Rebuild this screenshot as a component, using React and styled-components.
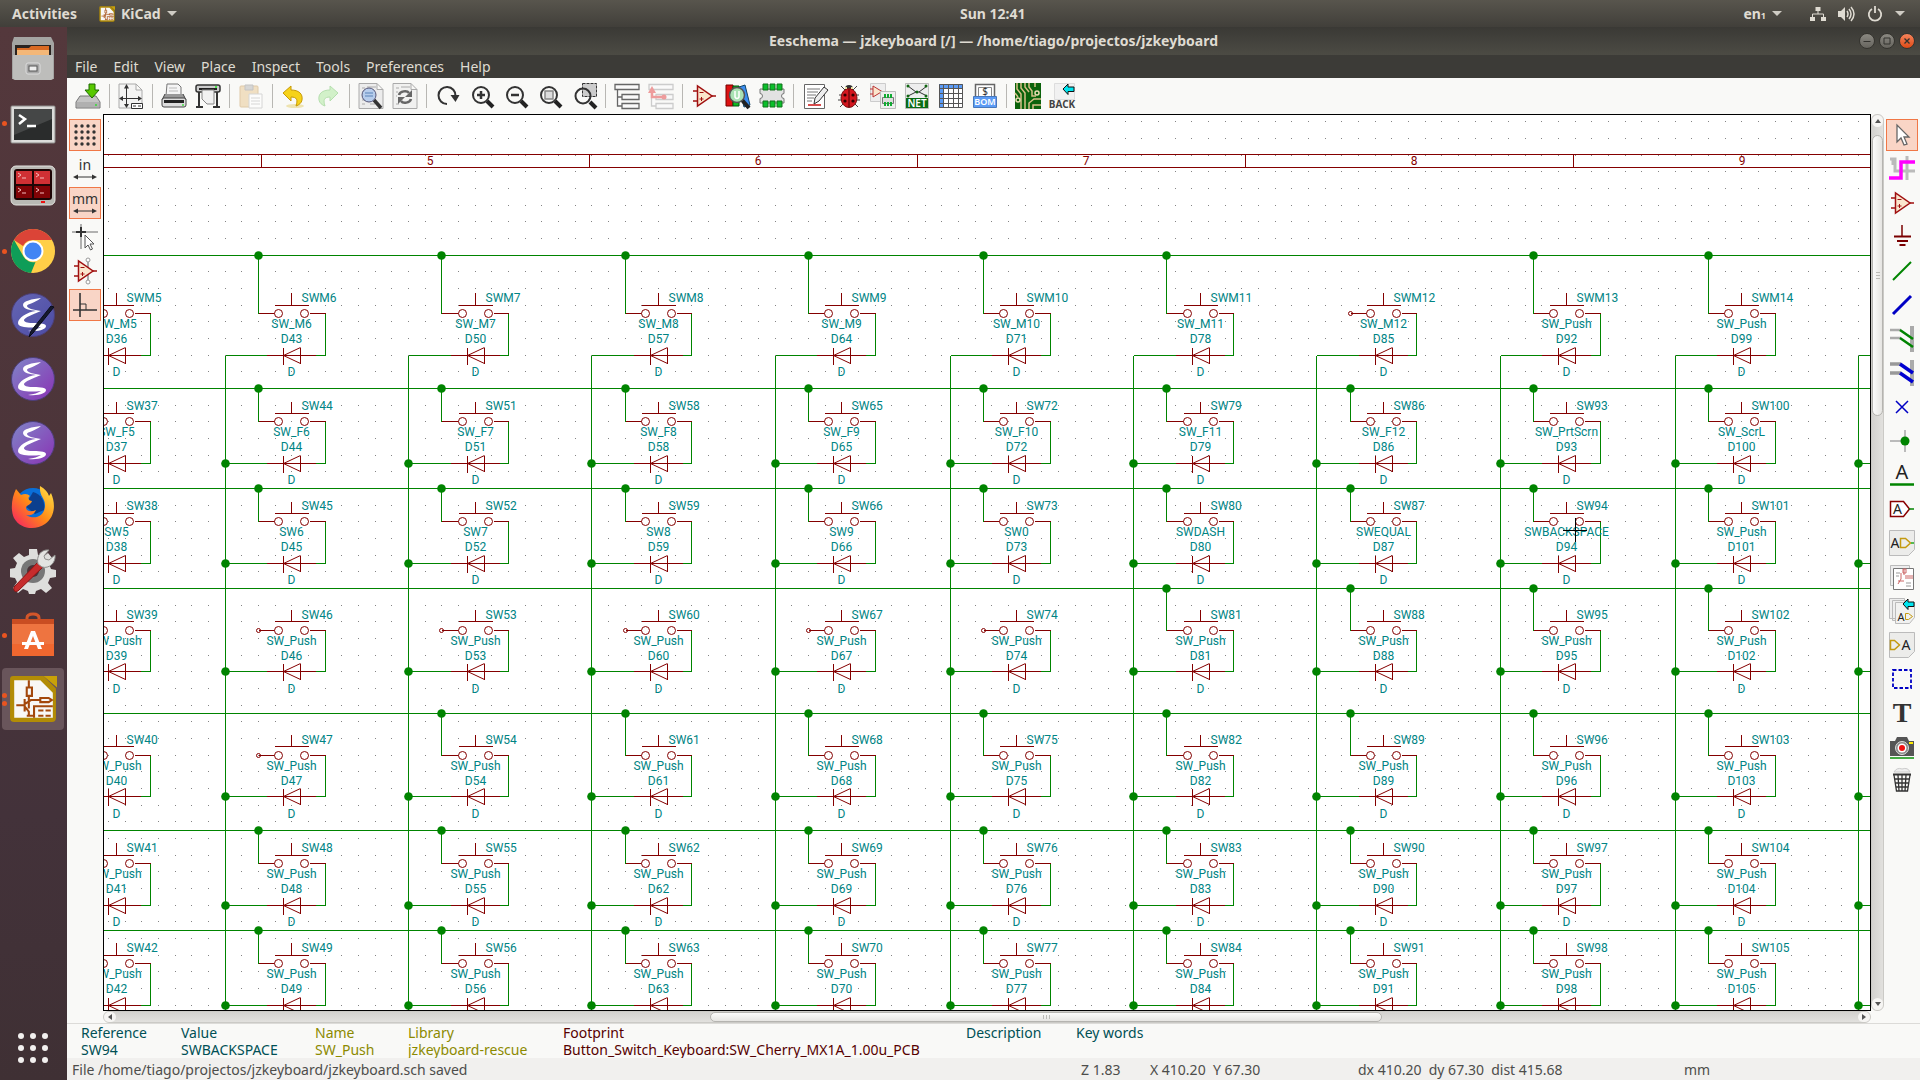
import React from "react";
import styled, { createGlobalStyle, css } from "styled-components";

const UI_FONT = '"Noto Sans", "Open Sans", sans-serif';
const SHEET_FONT = 'Roboto, "Noto Sans", sans-serif';

const GlobalStyle = createGlobalStyle`
  *, *::before, *::after { box-sizing: border-box; }
  body { margin: 0; background: #3c3b37; font-family: ${UI_FONT}; font-size: 14px; overflow: hidden; }
  button { font: inherit; color: inherit; background: none; border: 0; padding: 0; margin: 0; }
`;

/* ---------- shell ---------- */

const Desktop = styled.div`
  display: flex;
  flex-direction: column;
  height: 100vh;
`;

const TopBar = styled.header`
  display: flex;
  align-items: center;
  flex: 0 0 27px;
  background: linear-gradient(#58554d, #413f3a);
  color: #dfdbd2;
  font-weight: 700;
  line-height: 20px;
`;

const TopLeft = styled.div`
  display: flex;
  align-items: center;
  flex: 0 0 50%;
  padding-left: 12px;
  gap: 22px;
`;

const TopButton = styled.button`
  display: flex;
  align-items: center;
  gap: 6px;
`;

const TopRight = styled.div`
  display: flex;
  align-items: center;
  gap: 12px;
  margin-left: auto;
  padding-right: 15px;
`;

const Language = styled(TopButton)`
  margin-right: 16px;
  sub { font-size: 9px; line-height: 1; vertical-align: baseline; }
`;

const Caret = styled.span`
  border: 5px solid transparent;
  border-top-color: #cfccc4;
  border-bottom: 0;
`;

const Body = styled.div`
  display: flex;
  flex: 1;
  min-height: 0;
`;

const Dock = styled.nav`
  display: flex;
  flex-direction: column;
  flex: 0 0 67px;
  background: linear-gradient(#54383c, #4c353a 40%, #43323a 75%, #3f3034);
`;

const DockItem = styled.button`
  display: flex;
  align-items: center;
  justify-content: center;
  position: relative;
  height: 62px;
  margin: 1px 3px 1px 2px;
  border-radius: 4px;
  background: ${(p) => (p.$active ? "#69555b" : "transparent")};
  ${(p) => p.$last && css`margin-top: auto;`}
`;

const Dots = styled.span`
  position: absolute;
  left: 0;
  top: 0;
  bottom: 0;
  display: flex;
  flex-direction: column;
  justify-content: center;
  gap: 3px;
  i { width: 5px; height: 5px; border-radius: 50%; background: #e95420; }
`;

const Window = styled.main`
  display: flex;
  flex-direction: column;
  flex: 1;
  min-width: 0;
  background: #f9f9f7;
`;

const TitleBar = styled.div`
  display: grid;
  grid-template-columns: 1fr auto 1fr;
  align-items: center;
  flex: 0 0 28px;
  padding: 0 5px;
  background: linear-gradient(#3a3935, #4c4b44);
  color: #dfdbd2;
`;

const Title = styled.h1`
  grid-column: 2;
  margin: 0;
  font-size: 14px;
  line-height: 20px;
  font-weight: 700;
`;

const WindowButtons = styled.div`
  display: flex;
  justify-content: flex-end;
  gap: 4px;
`;

const RoundButton = styled.button`
  display: flex;
  width: 16px;
  height: 16px;
  border-radius: 50%;
  border: 1px solid #35342f;
  background: ${(p) => (p.$close ? "linear-gradient(#f5845c, #df4a16)" : "linear-gradient(#8b8982, #66645e)")};
`;

const MenuBar = styled.div`
  display: flex;
  align-items: center;
  flex: 0 0 23px;
  padding: 0 8px;
  gap: 16px;
  background: #3c3b37;
  color: #dfdbd2;
  line-height: 20px;
`;

const ToolBar = styled.div`
  display: flex;
  align-items: center;
  flex: 0 0 36px;
  padding-left: 4px;
`;

const ToolButton = styled.button`
  display: flex;
  align-items: center;
  justify-content: center;
  width: 34px;
  height: 34px;
`;

const Divider = styled.span`
  width: 1px;
  height: 24px;
  margin: 0 4px;
  background: #b8b7b3;
`;

const Workspace = styled.div`
  display: grid;
  grid-template-columns: 36px minmax(0, 1fr) 13px 36px;
  grid-template-rows: minmax(0, 1fr) 12px;
  flex: 1;
  min-height: 0;
`;

const SideBar = styled.div`
  display: flex;
  flex-direction: column;
  gap: 2px;
  grid-row: 1 / 3;
  grid-column: ${(p) => p.$column};
  padding: 5px 2px;
`;

const SideButton = styled.button`
  display: flex;
  align-items: center;
  justify-content: center;
  height: 32px;
  border: 1px solid ${(p) => (p.$on ? "#f07746" : "transparent")};
  background: ${(p) => (p.$on ? "#f9d5c6" : "transparent")};
`;

const Canvas = styled.div`
  grid-row: 1;
  grid-column: 2;
  border: 1px solid #000;
  background: #fff;
  overflow: hidden;
  svg { display: block; width: 100%; height: 100%; }
`;

const Scroll = styled.div`
  display: flex;
  flex-direction: ${(p) => (p.$vertical ? "column" : "row")};
  grid-row: ${(p) => (p.$vertical ? 1 : 2)};
  grid-column: ${(p) => (p.$vertical ? 3 : 2)};
  background: ${(p) => `linear-gradient(${p.$vertical ? "90deg" : "180deg"}, #d3d2cf, #e2e1de)`};
  border: 1px solid #cbcac6;
  border-radius: 6px;
`;

const ScrollStep = styled.button`
  display: flex;
  align-items: center;
  justify-content: center;
  flex: 0 0 12px;
  border-radius: 6px;
  background: #f6f5f3;
`;

const Track = styled.div`
  display: grid;
  flex: 1;
  ${(p) => (p.$vertical
    ? css`grid-template-rows: 8fr 281fr 583fr;`
    : css`grid-template-columns: 594fr 672fr 476fr;`)}
`;

const Thumb = styled.div`
  display: flex;
  flex-direction: ${(p) => (p.$vertical ? "column" : "row")};
  align-items: center;
  justify-content: center;
  gap: 2px;
  ${(p) => (p.$vertical ? "grid-row: 2;" : "grid-column: 2;")}
  border: 1px solid #b5b4b0;
  border-radius: 6px;
  background: ${(p) => `linear-gradient(${p.$vertical ? "90deg" : "180deg"}, #fbfbfa, #e6e5e2)`};
  i { background: #bcbbb7; ${(p) => (p.$vertical ? "width: 4px; height: 1px;" : "width: 1px; height: 4px;")} }
`;

const InfoPanel = styled.dl`
  display: grid;
  grid-template-columns: 100px 134px 93px 155px 403px 110px auto;
  flex: 0 0 35px;
  margin: 0;
  padding-left: 14px;
  border-top: 1px solid #dcdbd8;
  background: #f9f9f7;
  line-height: 17px;
  white-space: nowrap;
  dt, dd { margin: 0; }
`;

const Field = styled.div`
  color: ${(p) => p.$color};
`;

const StatusBar = styled.footer`
  display: grid;
  grid-template-columns: minmax(0, 1fr) 69px 208px 326px 236px;
  align-items: center;
  flex: 0 0 22px;
  padding: 1px 0 0 5px;
  background: #f1f0ee;
  color: #4d4d4b;
  line-height: 21px;
  white-space: pre;
`;

/* ---------- icons ---------- */

const INK = "#333";

const Svg = ({ size = 26, children, ...rest }) => (
  <svg width={size} height={size} viewBox="0 0 26 26" fill="none" overflow="visible" aria-hidden="true" {...rest}>{children}</svg>
);

const Paper = ({ x = 3, y = 1, w = 20, h = 24, fill = "#f4f4f3", stroke = "#aaa" }) => (
  <path d={`M${x} ${y}h${w - 6}l6 6v${h - 6}h${-w}zM${x + w - 6} ${y}v6h6`} fill={fill} stroke={stroke} />
);

const Glass = ({ children, lens = "none" }) => (
  <>
    <path d="M18 18l6 6" stroke="#222" strokeWidth="4" />
    <circle cx="12" cy="12" r="8" fill={lens} stroke={INK} strokeWidth="2" />
    {children}
  </>
);

const OpAmp = () => (
  <>
    <path d="M2 8h4M2 18h4M21 13h4" stroke="#a01010" strokeWidth="1.500" />
    <path d="M6.500 3v20L21 13z" fill="#fbe6cd" stroke="#a01010" strokeWidth="1.500" />
    <path d="M8.500 9.500h4M8.500 16h4M10.500 14v4" stroke="#a01010" />
  </>
);

const Chip = () => (
  <>
    <path d="M1 6h24v4.500a2.500 2.500 0 0 0 0 5V20H1v-4.500a2.500 2.500 0 0 0 0-5z" fill="#e2e2e2" stroke="#777" />
    <path d="M4 1h5v6H4zM11 1h5v6h-5zM18 1h5v6h-5zM4 18h5v6H4zM11 18h5v6h-5zM18 18h5v6h-5z" fill="#0bbf2b" stroke="#12701d" />
  </>
);

const BackArrow = ({ x = 14, y = 1 }) => (
  <path d={`M${x} ${y + 5}l5-5v3h6v4.500h-6v3z`} fill="#00e5ef" stroke="#111" />
);

const Tree = ({ color }) => (
  <path d="M1 1.500h24v5H1zM8 11.500h17v5H8zM8 20.500h17v5H8zM3.500 6.500V23H8M3.500 14H8" stroke={color} strokeWidth="1.300" fill="#fafafa" />
);

const Grid = () => (
  <Svg>{[4, 10, 16, 22].map((y) => [4, 10, 16, 22].map((x) => <circle key={`${x}-${y}`} cx={x} cy={y} r="1.700" fill={INK} />))}</Svg>
);

const Unit = ({ label }) => (
  <Svg>
    <text x="13" y="14" textAnchor="middle" fontFamily={UI_FONT} fontSize="14" fill={INK}>{label}</text>
    <path d="M3 21h20" stroke={INK} />
    <path d="M1 21l5-2.500v5zM25 21l-5-2.500v5z" fill={INK} />
  </Svg>
);

const icons = {
  save: <Svg><path d="M5 13h16l4 6v6H1v-6z" fill="#c4c4c4" stroke="#777" /><path d="M2 19h22v5H2z" fill="#b0b0b0" /><path d="M14 1h6v6h4l-7 8-7-8h4z" fill="#58c800" stroke="#1c6a00" /><circle cx="21" cy="22" r="1" fill="#3d3" /></Svg>,
  page: <Svg><Paper x={1} y={1} w={23} /><path d="M8.500 4v19M4 15.500h18" stroke={INK} /><path d="M8.500 1L6 5.500h5zM8.500 25L6 21h5zM1 15.500l4-2.500v5zM24 15.500L20 13v5z" fill={INK} /><path d="M13.500 20.500h11v5h-11z" fill="#fff" stroke={INK} /><path d="M15 23h3M20 23h3" stroke={INK} /></Svg>,
  print: <Svg><path d="M6 1h11l3 3v9H5z" fill="#f5f5f5" stroke="#777" /><path d="M8 5h8M8 8h9" stroke="#bbb" /><path d="M4 11L1 17h24l-3-6" fill="#999" stroke="#444" /><rect x="1" y="15" width="24" height="9" rx="2" fill="#ddd" stroke="#444" /><path d="M3 18.500h20" stroke="#222" strokeWidth="3" /><circle cx="22" cy="22" r="1" fill="#4d4" /></Svg>,
  plot: <Svg><path d="M4 8v15M22 8v15M1 24h7M18 24h7" stroke={INK} strokeWidth="2" /><rect x="1" y="2" width="24" height="7" rx="2" fill="#ccc" stroke={INK} strokeWidth="1.500" /><path d="M4 6h18" stroke="#222" strokeWidth="2" /><path d="M7 7h12v14H12l-5-5z" fill="#f1f1f1" stroke="#888" /><circle cx="21" cy="4" r="1" fill="#2e2" /></Svg>,
  paste: <Svg opacity="0.550"><rect x="2" y="3" width="18" height="21" rx="1" fill="#eacb98" stroke="#cba468" /><path d="M7 2h8v5H7z" fill="#bbb" stroke="#999" /><path d="M11 11h13v14H11z" fill="#fff" stroke="#bbb" /><path d="M13 15h9M13 18h9M13 21h9" stroke="#bbb" /></Svg>,
  undo: <Svg><ellipse cx="14" cy="23" rx="9" ry="2" fill="#eee3b0" /><path d="M2 10l8-7v4c8 0 12 4 11 10-.5 3-3 5-6 6 2-6 1-9-5-9v4z" fill="#f6d21a" stroke="#c79a06" /></Svg>,
  redo: <Svg opacity="0.550"><path d="M23 10l-8-7v4C7 7 3 11 4 17c.5 3 3 5 6 6-2-6-1-9 5-9v4z" fill="#b4eba4" stroke="#7fca74" /></Svg>,
  find: <Svg><Paper x={1} y={0.5} w={24} h={25} fill="#ececec" /><path d="M4 5h3M4 9h3M4 13h3M4 17h3M4 21h3M9 4h9M12 21h5" stroke="#aaa" /><path d="M16 17l7 8" stroke="#333" strokeWidth="3.500" /><circle cx="11" cy="12" r="7" fill="#b7cdec" stroke="#557" /><path d="M7 10h8M7 13h8" stroke="#7a9cc9" strokeWidth="1.500" /></Svg>,
  replace: <Svg><Paper x={1} y={0.5} w={24} h={25} fill="#f1f1f0" /><path d="M4 5h3M4 9h2M4 13h1M4 21h3M9 4h9" stroke="#aaa" /><path d="M7 12c1-4 8-5 10-2M19 16c-1 4-8 5-10 2" stroke="#666" strokeWidth="2.500" /><path d="M20 7v7h-7zM6 21v-7h7z" fill="#666" /></Svg>,
  refresh: <Svg><path d="M12 21A8.500 8.500 0 1 1 20.500 13" stroke={INK} strokeWidth="2" /><path d="M15.500 12h9l-4 7z" fill={INK} /></Svg>,
  zoomIn: <Svg><Glass><path d="M8 12h8M12 8v8" stroke={INK} strokeWidth="2.500" /></Glass></Svg>,
  zoomOut: <Svg><Glass><path d="M8 12h8" stroke={INK} strokeWidth="2.500" /></Glass></Svg>,
  zoomFit: <Svg><Glass><rect x="8" y="8" width="8" height="8" fill="#ddd" stroke="#888" strokeWidth="1.500" /></Glass></Svg>,
  zoomSel: <Svg><rect x="11.500" y="0.500" width="14" height="13" fill="#ccc" stroke={INK} strokeDasharray="3 1" /><path d="M19 19l6 6" stroke="#222" strokeWidth="4" /><circle cx="12" cy="13" r="7.500" stroke={INK} strokeWidth="2" /></Svg>,
  tree: <Svg><Tree color="#666" /></Svg>,
  leave: <Svg><Tree color="#ccc" /><path d="M4 8v6h13" stroke="#ee9c9c" strokeWidth="2.500" /><path d="M0 10l4-7 4 7z" fill="#ee9c9c" /><circle cx="16" cy="14" r="2.500" fill="#ee9c9c" /></Svg>,
  opamp: <Svg><OpAmp /></Svg>,
  library: <Svg><path d="M1 2h7v21H1z" fill="#d11" stroke="#700" /><path d="M8 3h6v20H8z" fill="#1b2" stroke="#051" /><path d="M14 4l6-2 5 20-6 2z" fill="#3b8df0" stroke="#146" /><path d="M17 17l7 8" stroke="#222" strokeWidth="4" /><circle cx="12" cy="12" r="7.500" fill="#a9e2b3" stroke="#555" strokeWidth="1.500" /><path d="M10 8v6q2 3 4 0V8" stroke="#fff" strokeWidth="1.500" /></Svg>,
  chip: <Svg><Chip /></Svg>,
  annotate: <Svg><path d="M2.500 1.500h20v24h-20z" fill="#fff" stroke="#666" /><path d="M5 6h13M5 9h11M5 12h9M5 15h7M5 18h5" stroke="#777" /><path d="M6 22h13" stroke="#c11" strokeWidth="1.500" /><path d="M12 21l1-6 9-11 4 3-9 11z" fill="#eee" stroke={INK} /></Svg>,
  bug: <Svg><path d="M5 3l5 5M21 3l-5 5M3 12h4M2 17h5M4 24l4-4M23 12h-4M24 17h-5M22 24l-4-4" stroke="#444" /><circle cx="13" cy="6" r="4" fill="#333" /><ellipse cx="13" cy="15" rx="8" ry="9.500" fill="#d3161e" stroke="#711" /><path d="M13 6v18" stroke="#400" /><path d="M9 4h2v2H9zM15 4h2v2h-2z" fill="#e8e2a0" /><g fill="#300"><circle cx="9" cy="12" r="1.600" /><circle cx="17" cy="12" r="1.600" /><circle cx="9" cy="18" r="1.600" /><circle cx="17" cy="18" r="1.600" /></g></Svg>,
  assoc: <Svg><path d="M.5.500h15v18H.5z" fill="#eee" stroke="#ccc" /><path d="M3 3v11l9-5.500zM0 6h3M0 11h3" fill="#fbe6cd" stroke="#b33" /><path d="M10.500 8.500h15v17h-15z" fill="#eee" stroke="#bbb" /><path d="M12.500 14.500h11v6h-11z" fill="#ddd" stroke="#777" /><path d="M14 11h2v4h-2zM17 11h2v4h-2zM20 11h2v4h-2zM14 19h2v4h-2zM17 19h2v4h-2zM20 19h2v4h-2z" fill="#1a3" /></Svg>,
  net: <Svg><path d="M1.500.500h23v25h-23z" fill="#eee" stroke="#bbb" /><path d="M4 3l8 6h3l8-6M12 9l-8 4M15 9l8 4" stroke={INK} /><g fill="#161"><circle cx="4" cy="3" r="1.500" /><circle cx="22" cy="3" r="1.500" /><circle cx="13" cy="9" r="1.500" /><circle cx="4" cy="13" r="1.500" /><circle cx="22" cy="13" r="1.500" /></g><path d="M2 15h22v10H2z" fill="#0b6b14" /><text x="13" y="24" textAnchor="middle" fontFamily={UI_FONT} fontSize="10" fontWeight="600" fill="#fff">NET</text></Svg>,
  table: <Svg><path d="M1.500 1.500h23v23h-23z" fill="#fff" /><path d="M1 1h24v4H1zM1 1h4v24H1z" fill="#5b9bf5" /><path d="M1.500 1.500h23v23h-23zM5.500 1v24M10.500 1v24M15.500 1v24M20.500 1v24M1 5.500h24M1 10.500h24M1 15.500h24M1 20.500h24" stroke="#555" /></Svg>,
  bom: <Svg><path d="M3.500 1.500h19v16h-19z" fill="#fff" stroke="#666" strokeWidth="1.500" /><path d="M6.500 4.500h13v12h-13z" stroke="#888" /><text x="13" y="12" textAnchor="middle" fontFamily={UI_FONT} fontSize="10" fill={INK}>$</text><path d="M1.500 13.500h23v11h-23z" fill="#5b9bf5" stroke="#4878bb" /><text x="13" y="22" textAnchor="middle" fontFamily={UI_FONT} fontSize="9" fontWeight="600" fill="#fff">BOM</text></Svg>,
  pcb: <Svg><path d="M0 0h26v26H0z" fill="#0b620b" /><path d="M2 0v6l4 5v15M6 0v5l4 5v16M10 0v4l4 5M14 0v4l3 4v5h4M20 0v4M0 10l3 4M14 26v-6l5-4h7M18 26v-4h8" stroke="#d8c088" strokeWidth="1.500" /><circle cx="22" cy="10" r="2" stroke="#e8dcb0" strokeWidth="1.500" /><circle cx="3" cy="17" r="2" stroke="#e8dcb0" strokeWidth="1.500" /></Svg>,
  back: <Svg><path d="M5.500.500h20v16h-20z" fill="#f1f1f1" stroke="#ddd" /><BackArrow /><text x="13" y="25" textAnchor="middle" fontFamily={UI_FONT} fontSize="10" fontWeight="700" fill="#444">BACK</text></Svg>,

  grid: <Grid />,
  inch: <Unit label="in" />,
  mm: <Unit label="mm" />,
  cursorShape: <Svg><path d="M9 0v19M0 8h26M9 15v10" stroke="#999" strokeWidth="1.500" /><path d="M9 3v10M4 8h10" stroke={INK} strokeWidth="2" /><path d="M13 11v13l3-3 2.500 5 2-1-2.500-5h4z" fill="#fff" stroke="#555" /></Svg>,
  hidden: <Svg><path d="M16 3v20" stroke="#aaa" strokeWidth="2" /><OpAmp /><circle cx="16" cy="2" r="2" stroke="#999" fill="#fff" /><circle cx="16" cy="24" r="2" stroke="#999" fill="#fff" /></Svg>,
  ortho: <Svg><path d="M8 1v24M1 18h24" stroke={INK} strokeWidth="1.600" /><path d="M8 12h6v6" stroke={INK} /></Svg>,

  arrow: <Svg><path d="M8 3v17l4-4 3 7 3-1-3-7h5z" fill="#fff" stroke="#666" strokeWidth="1.300" /></Svg>,
  highlight: <Svg><path d="M1 3h5v12h20M18 0v24M4 3v6" stroke="#bbb" strokeWidth="3" /><path d="M0 22h12V6h14" stroke="#f0f" strokeWidth="3.500" /></Svg>,
  power: <Svg><path d="M13 1v12" stroke="#7a0000" strokeWidth="1.500" /><path d="M5 12.500h17M8 17h11M10.500 21h6" stroke="#7a0000" strokeWidth="2" /></Svg>,
  wire: <Svg><path d="M4 22L22 4" stroke="#008400" strokeWidth="2" /></Svg>,
  bus: <Svg><path d="M4 22L22 4" stroke="#0000c4" strokeWidth="3" /></Svg>,
  wireEntry: <Svg><path d="M23 0v26" stroke="#aaa" strokeWidth="4" /><path d="M1 4h11M1 12h11" stroke="#aaa" strokeWidth="2.500" /><path d="M11 4l13 9M11 12l13 9" stroke="#008400" strokeWidth="2.500" /></Svg>,
  busEntry: <Svg><path d="M23 0v26" stroke="#aaa" strokeWidth="4" /><path d="M1 4h11M1 13h11" stroke="#999" strokeWidth="3.500" /><path d="M11 4l13 9M11 13l13 9" stroke="#0000d0" strokeWidth="3.500" /></Svg>,
  noConnect: <Svg><path d="M7 7l12 12M19 7L7 19" stroke="#0000c4" strokeWidth="1.500" /></Svg>,
  junction: <Svg><path d="M16 2v22M1 13h15" stroke="#bbb" strokeWidth="2" /><circle cx="16" cy="13" r="4.500" fill="#008400" /></Svg>,
  label: <Svg><text x="13" y="17" textAnchor="middle" fontFamily={UI_FONT} fontSize="20" fill="#222">A</text><path d="M1 22.500h24" stroke="#008400" strokeWidth="2.500" /></Svg>,
  globalLabel: <Svg><path d="M1.500 5.500h13l6 7.500-6 7.500h-13z" fill="#fff" stroke="#8a0000" strokeWidth="1.500" /><path d="M20 13h5" stroke="#008400" strokeWidth="1.500" /><text x="8.500" y="18" textAnchor="middle" fontFamily={UI_FONT} fontSize="14" fill="#222">A</text></Svg>,
  hierLabel: <Svg><path d="M.5.500h25v19l-6 6H.5z" fill="#ececea" stroke="#bbb" /><text x="6" y="18" textAnchor="middle" fontFamily={UI_FONT} fontSize="14" fill="#222">A</text><path d="M11.500 8.500h5l5 4.500-5 4.500h-5z" stroke="#c49a10" strokeWidth="1.500" /><path d="M22 13h3" stroke="#2a2" strokeWidth="1.500" /></Svg>,
  sheet: <Svg><path d="M1.500 1.500h19v20h-19z" fill="#eee" stroke="#bbb" /><path d="M4.500 4.500h20v21h-20z" fill="#fff" stroke="#777" /><path d="M15 5v6M12 9v6l-3 5M16 12h8M16 14h8M9 17h6M14 5h3v4h-3z" stroke="#c66" /><path d="M7 9h4M7 12h3M17 19h5M17 22h5" stroke="#999" /></Svg>,
  importPin: <Svg><path d="M.5.500h15v20H.5zM3.500 2.500h15v20h-15z" fill="#eee" stroke="#bbb" /><path d="M6.500 4.500h19v15l-5 6h-14z" fill="#f1f1f0" stroke="#bbb" /><BackArrow y={1} /><text x="12" y="23" textAnchor="middle" fontFamily={UI_FONT} fontSize="11" fill="#222">A</text><path d="M16.500 15.500h3l4 3-4 3h-3z" stroke="#c49a10" /></Svg>,
  sheetPin: <Svg><path d="M.5.500h25v19l-6 6H.5z" fill="#ececea" stroke="#bbb" /><path d="M1.500 8.500h4l5 4.500-5 4.500h-4z" stroke="#c49a10" strokeWidth="1.500" /><text x="17" y="18" textAnchor="middle" fontFamily={UI_FONT} fontSize="14" fill="#222">A</text></Svg>,
  dashed: <Svg><rect x="4" y="4" width="18" height="18" stroke="#0000c4" strokeWidth="1.800" strokeDasharray="3.500 2" /></Svg>,
  text: <Svg><text x="13" y="22" textAnchor="middle" fontFamily='"Liberation Serif", serif' fontSize="28" fontWeight="700" fill="#333">T</text></Svg>,
  image: <Svg><path d="M1 7h5l2-4h10l2 4h5v15H1z" fill="#555" /><path d="M1 24h24" stroke="#4a4" strokeWidth="2" /><circle cx="13" cy="14" r="6.500" fill="#888" stroke="#ddd" /><circle cx="13" cy="14" r="4.500" fill="#fff" /><circle cx="13" cy="14" r="3" fill="#e11" /><path d="M20 8h4v2h-4z" fill="#fe0" /></Svg>,
  trash: <Svg><path d="M5 4q3-5 8-3 6-2 8 3z" fill="#eee" stroke="#ccc" /><path d="M4 6.500h18" stroke={INK} strokeWidth="2" /><path d="M5 7l2.500 16h11L21 7M9 7l1 16M13 7v16M17 7l-1 16M6 11h14M6.500 15h13M7 19h12" stroke={INK} strokeWidth="1.300" /></Svg>,
};

const DockIcon = ({ children, size = 46 }) => (
  <svg width={size} height={size} viewBox="0 0 46 46" fill="none" aria-hidden="true">{children}</svg>
);

const Disc = ({ id, from, to, children }) => (
  <DockIcon>
    <defs><linearGradient id={id} x1="0" y1="0" x2="1" y2="1"><stop stopColor={from} /><stop offset="1" stopColor={to} /></linearGradient></defs>
    <circle cx="23" cy="23" r="21.500" fill={`url(#${id})`} stroke="#4c3f78" />
    {children}
  </DockIcon>
);

const EmacsStroke = () => (
  <path d="M31 6c-9 1-18 3-18 7s7 5 13 6c-9 1-18 7-18 12s13 5 23 4c-3 2-7 3-13 4 12 1 18-2 18-5s-9-3-14-3-8-1-8-3 9-6 17-9c-8-1-14-3-14-5s8-3 14-8z" fill="#fff" />
);

const KicadIcon = () => (
  <>
    <path d="M2 1h31l12 12v28q0 4-4 4H5q-4 0-4-4V4q0-3 3-3z" fill="#b28c06" />
    <path d="M5 5h25l12 12v24H5z" fill="#f8f8f6" />
    <path d="M33 1h13v11z" fill="#c9a108" />
    <path d="M19 5v7M17 12h5v8h-5zM19 20v12M7 29h8M15 23v12M15 28l6-4h9M30 22h8l3 2-3 2h-8zM15 30l4 5v4M17 39h6M24 41V30h18M28 34h5M35 34h5M28 39h5M35 39h5" stroke="#a3480c" strokeWidth="2" />
  </>
);

const dockItems = [
  { name: "Files", icon: <DockIcon><path d="M4 1h37l3 6v36H2V7z" fill="#a4a4a2" /><path d="M5 9h36v12H5z" fill="#2a2320" /><path d="M7 12h12l2-2h18v10H7z" fill="#d96a24" /><path d="M7 14h32v6H7z" fill="#f3b778" /><path d="M3 19h40v23q0 2-2 2H5q-2 0-2-2z" fill="#bdbdbb" /><rect x="16" y="27" width="14" height="11" rx="2" fill="#aaa" stroke="#ddd" /><rect x="19" y="30" width="8" height="5" fill="#eee" stroke="#555" /></DockIcon> },
  { name: "Terminal", dots: 1, icon: <DockIcon><rect x="1" y="6" width="44" height="37" rx="1" fill="#dcdcda" stroke="#8e8e8c" /><rect x="4" y="9" width="38" height="31" fill="#2a2c2c" /><path d="M4 9h38v10L4 35z" fill="#454747" /><path d="M9 15l6 4-6 5M17 26h9" stroke="#fff" strokeWidth="2.500" /></DockIcon> },
  { name: "Terminator", icon: <DockIcon><rect x="1" y="2" width="44" height="39" rx="5" fill="#b9b9b4" stroke="#e3e3df" /><rect x="4" y="5" width="38" height="31" rx="3" fill="#1d0505" /><path d="M6 7h16v13H6zM24 7h16v13H24z" fill="#d03034" /><path d="M6 22h16v12H6zM24 22h16v12H24z" fill="#800306" /><path d="M8 9l3 2-3 2M12 14h4M26 9l3 2-3 2M30 14h4M8 24l3 2-3 2M12 29h4M26 24l3 2-3 2M30 29h4" stroke="#f4bcbc" /><path d="M31 37h4v2h-4z" fill="#e11" /></DockIcon> },
  { name: "Chrome", dots: 1, icon: <DockIcon><circle cx="23" cy="23" r="22" fill="#ffcf48" /><path d="M4 12A22 22 0 0 1 42 12H23a11 11 0 0 0-10 6z" fill="#db4437" /><path d="M4 12l9.500 16.500a11 11 0 0 0 12 5.500L21 45A22 22 0 0 1 4 12z" fill="#0f9d58" /><circle cx="23" cy="23" r="10.500" fill="#fff" /><circle cx="23" cy="23" r="8.500" fill="#4285f4" /></DockIcon> },
  { name: "Emacs client", icon: <Disc id="ec" from="#6566b4" to="#4c4ba4"><EmacsStroke /><path d="M44 15L23 41l-4 4 2-6L41 14z" fill="#161a2e" stroke="#0a0c18" /></Disc> },
  { name: "Emacs", icon: <Disc id="e1" from="#7f86c8" to="#8a32b4"><EmacsStroke /></Disc> },
  { name: "Emacs GUI", icon: <Disc id="e2" from="#7f86c8" to="#8a32b4"><EmacsStroke /></Disc> },
  { name: "Firefox", icon: <DockIcon><defs><linearGradient id="ff" x1="1" y1="0" x2="0" y2="1"><stop stopColor="#ffe94a" /><stop offset=".5" stopColor="#ff8a16" /><stop offset="1" stopColor="#f5156c" /></linearGradient></defs><circle cx="23" cy="22" r="18" fill="#0a6fd8" /><path d="M23 8a15 15 0 0 1 11 18l-9 4-10-8z" fill="#0b3f8e" /><path d="M6 5l5 6c4-2 7-1 9 1-3 2-1 5 2 5-1 4-6 4-6 7 1 4 6 4 10 2-2 5-7 6-10 5 8 5 19 2 19-10 0-7-6-9-5-19 5 3 8 6 9 10l2-3c5 11 4 24-6 31s-25 5-31-6C0 25 2 13 6 5z" fill="url(#ff)" /></DockIcon> },
  { name: "Settings", icon: <DockIcon><path d="M19 1h8l1 6 5 2 5-4 5 6-4 5 2 5 5 1v7l-6 1-2 5 4 5-6 5-5-4-5 2-1 3h-6l-1-3-5-2-5 4-5-5 4-6-2-4-6-1v-8l6-1 2-5-4-5 6-5 5 4 5-2z" fill="#dededc" /><circle cx="23" cy="23" r="12" fill="#777" /><circle cx="23" cy="23" r="6" fill="#4a3439" /><path d="M4 39L28 14l5 5L8 43q-5 2-4-4z" fill="#c62c2c" stroke="#8d1313" /><path d="M28 16c-2-8 3-15 11-14l-5 6 1 3 4 1 6-5c1 8-6 14-13 12z" fill="#e3e3e1" stroke="#8f8f8d" /></DockIcon> },
  { name: "Software", dots: 1, icon: <DockIcon><path d="M17 14V6q0-4 6-4t6 4v8" stroke="#d3562a" strokeWidth="3" /><path d="M2 7h42v37H2z" fill="#ee7440" /><path d="M2 7h42v5H2z" fill="#c94d22" /><path d="M2 32h42v12H2z" fill="#f0672f" /><path d="M14 37l7-18h4l7 18h-4l-5-13-5 13zM12 30h22v3H12z" fill="#fff" /></DockIcon> },
  { name: "KiCad", dots: 2, active: true, icon: <DockIcon size={48}><KicadIcon /></DockIcon> },
];

/* ---------- schematic ---------- */

const U = 50 / 3;
const X0 = 258.4;
const GREEN = "#008400";
const MAROON = "#840000";
const TEAL = "#008484";
const px = (v) => Math.floor(v) + 0.5;

const columnX = [-10.5, 0, 11, 22, 33, 43.5, 54.5, 65.5, 76.5, 87].map((n) => X0 + n * U);
const rightBus = X0 + 96 * U;

const rows = [
  { bus: 255.1, pin: 313.4, open: [7], names: ["SW_M5", "SW_M6", "SW_M7", "SW_M8", "SW_M9", "SW_M10", "SW_M11", "SW_M12", "SW_Push", "SW_Push"] },
  { bus: 388.4, pin: 421.7, open: [], names: ["SW_F5", "SW_F6", "SW_F7", "SW_F8", "SW_F9", "SW_F10", "SW_F11", "SW_F12", "SW_PrtScrn", "SW_ScrL"] },
  { bus: 488.4, pin: 521.7, open: [], names: ["SW5", "SW6", "SW7", "SW8", "SW9", "SW0", "SWDASH", "SWEQUAL", "SWBACKSPACE", "SW_Push"] },
  { bus: 588.4, pin: 630.1, open: [1, 2, 3, 4, 5] },
  { bus: 713.4, pin: 755.1, open: [1] },
  { bus: 830.1, pin: 863.4, open: [] },
  { bus: 930.1, pin: 963.4, open: [] },
];

const Wires = styled.g`
  shape-rendering: crispEdges;
  fill: none;
  stroke: ${(p) => p.$color};
`;

const Label = styled.text`
  font: 400 12px ${SHEET_FONT};
  fill: ${(p) => p.$color || TEAL};
  text-anchor: ${(p) => (p.$start ? "start" : "middle")};
`;

const Junction = ({ x, y }) => <circle cx={px(x)} cy={px(y)} r="4.300" fill={GREEN} />;

function Key({ x, row, r, c }) {
  const p = row.pin;
  const d = p + 2.5 * U;
  const cx = px(x + 2 * U);
  const py = px(p);
  const dy = px(d);
  const right = px(x + 4 * U);
  const left = px(x - 2 * U);
  const open = row.open.includes(c);
  const number = 36 + 7 * c + r;
  return (
    <g>
      <Wires $color={GREEN}>
        {!open && <path d={`M${px(x)} ${px(row.bus)}V${py}`} />}
        <path d={`M${right} ${py}V${dy}H${cx + 24}M${cx - 25} ${dy}H${left}`} />
      </Wires>
      <Wires $color={MAROON}>
        <path d={`M${px(x)} ${py}H${cx - 17}M${cx + 18} ${py}H${right}M${cx - 17} ${px(p - 8.3)}H${cx + 17}M${cx} ${px(p - 20.5)}V${px(p - 8.3)}`} />
        <path d={`M${cx - 25} ${dy}H${cx + 24}M${cx - 8} ${dy - 8}V${dy + 9}M${cx + 9} ${dy - 8}V${dy + 8}`} />
      </Wires>
      <g fill="none" stroke={MAROON}>
        <path d={`M${cx + 9} ${dy - 8}L${cx - 8} ${dy}L${cx + 9} ${dy + 8}`} />
        <circle cx={cx - 13} cy={py} r="4" fill="#fff" />
        <circle cx={cx + 13} cy={py} r="4" fill="#fff" />
        {open && <circle cx={px(x)} cy={py} r="2" />}
      </g>
      <Label $start x={cx + 10} y={py - 12}>{r === 0 ? `SWM${5 + c}` : `SW${number}`}</Label>
      <Label x={cx} y={py + 14}>{row.names ? row.names[c] : "SW_Push"}</Label>
      <Label x={cx} y={py + 29}>{`D${number}`}</Label>
      <Label x={cx} y={py + 62}>D</Label>
    </g>
  );
}

function gridPath() {
  let d = "";
  for (let y = 371.7 - 15 * U; y < 1012; y += U) {
    for (let x = X0 - 9 * U; x < 1872; x += U) d += `M${Math.floor(x)} ${px(y)}h1`;
  }
  return d;
}

const dotsPath = gridPath();

function Schematic() {
  const buses = [...columnX.slice(1).map((x) => x - 2 * U), rightBus];
  return (
    <svg role="img" aria-label="Keyboard matrix schematic">
      <g transform="translate(-104 -115)">
        <Wires $color="#848484"><path d={dotsPath} /></Wires>
        <Wires $color={MAROON}>
          <path d="M100 154.500H1875M100 167.500H1875M261.500 154V167M589.500 154V167M917.500 154V167M1245.500 154V167M1573.500 154V167" />
        </Wires>
        {[5, 6, 7, 8, 9].map((n, i) => <Label key={n} $color={MAROON} x={430 + 328 * i} y="165">{n}</Label>)}
        <Wires $color={GREEN}>
          {rows.map((row) => <path key={row.bus} d={`M100 ${px(row.bus)}H1875`} />)}
          {buses.map((x) => <path key={x} d={`M${px(x)} ${px(355.1)}V1012`} />)}
          {rows.map((row) => <path key={row.pin} d={`M${px(rightBus)} ${px(row.pin + 2.5 * U)}H1875`} />)}
        </Wires>
        {rows.map((row, r) => columnX.map((x, c) => <Key key={`${r}-${c}`} x={x} row={row} r={r} c={c} />))}
        {rows.map((row, r) => columnX.map((x, c) => !row.open.includes(c) && <Junction key={`${r}-${c}`} x={x} y={row.bus} />))}
        {rows.slice(1).map((row) => buses.map((x) => <Junction key={`${row.pin}-${x}`} x={x} y={row.pin + 2.5 * U} />))}
        <Wires $color="#000"><path d="M1563 530.500H1587M1575.500 518V542" /></Wires>
      </g>
    </svg>
  );
}

/* ---------- page data ---------- */

const menus = ["File", "Edit", "View", "Place", "Inspect", "Tools", "Preferences", "Help"];

const toolGroups = [
  [["Save", "save"]],
  [["Page settings", "page"]],
  [["Print", "print"], ["Plot", "plot"]],
  [["Paste", "paste"]],
  [["Undo", "undo"], ["Redo", "redo"]],
  [["Find", "find"], ["Find and replace", "replace"]],
  [["Refresh", "refresh"], ["Zoom in", "zoomIn"], ["Zoom out", "zoomOut"], ["Zoom to fit", "zoomFit"], ["Zoom to selection", "zoomSel"]],
  [["Hierarchy", "tree"], ["Leave sheet", "leave"]],
  [["Symbol editor", "opamp"], ["Symbol libraries", "library"], ["Footprint editor", "chip"]],
  [["Annotate", "annotate"], ["Rules check", "bug"], ["Assign footprints", "assoc"], ["Netlist", "net"], ["Symbol fields", "table"], ["Bill of materials", "bom"]],
  [["Board editor", "pcb"], ["Back import", "back"]],
];

const leftTools = [["Grid", "grid", true], ["Inches", "inch"], ["Millimetres", "mm", true], ["Cursor shape", "cursorShape"], ["Hidden pins", "hidden"], ["Orthogonal wires", "ortho", true]];

const rightTools = [
  ["Select", "arrow", true], ["Highlight net", "highlight"], ["Place symbol", "opamp"], ["Place power", "power"],
  ["Wire", "wire"], ["Bus", "bus"], ["Wire entry", "wireEntry"], ["Bus entry", "busEntry"], ["No connect", "noConnect"],
  ["Junction", "junction"], ["Label", "label"], ["Global label", "globalLabel"], ["Hierarchical label", "hierLabel"],
  ["Sheet", "sheet"], ["Import pin", "importPin"], ["Sheet pin", "sheetPin"], ["Lines", "dashed"], ["Text", "text"],
  ["Image", "image"], ["Delete", "trash"],
];

const fields = [
  ["Reference", "SW94", "#005055"], ["Value", "SWBACKSPACE", "#005055"], ["Name", "SW_Push", "#8c8a00"],
  ["Library", "jzkeyboard-rescue", "#8c8a00"], ["Footprint", "Button_Switch_Keyboard:SW_Cherry_MX1A_1.00u_PCB", "#560000"],
  ["Description", "", "#005055"], ["Key words", "", "#005055"],
];

const Step = ({ label, d }) => (
  <ScrollStep aria-label={label}><svg width="6" height="6" viewBox="0 0 6 6" aria-hidden="true"><path d={d} fill="#555" /></svg></ScrollStep>
);

const SideTools = ({ column, tools, label }) => (
  <SideBar $column={column} role="toolbar" aria-label={label}>
    {tools.map(([name, icon, on]) => <SideButton key={name} $on={on} aria-label={name}>{icons[icon]}</SideButton>)}
  </SideBar>
);

export default function App() {
  return (
    <Desktop>
      <GlobalStyle />
      <TopBar>
        <TopLeft>
          <TopButton>Activities</TopButton>
          <TopButton>
            <svg width="16" height="16" viewBox="0 0 46 46" fill="none" aria-hidden="true"><KicadIcon /></svg>
            KiCad<Caret />
          </TopButton>
        </TopLeft>
        <time>Sun 12:41</time>
        <TopRight>
          <Language><span>en<sub>1</sub></span><Caret /></Language>
          <svg width="16" height="16" viewBox="0 0 16 16" fill="none" aria-hidden="true"><path d="M5.500 1h5v4h-5zM0 11h5v4H0zM11 11h5v4h-5z" fill="#dfdbd2" /><path d="M8 5v3M2.500 11V8h11v3" stroke="#dfdbd2" /></svg>
          <svg width="17" height="16" viewBox="0 0 17 16" fill="none" aria-hidden="true"><path d="M0 5h3l4-4v14l-4-4H0z" fill="#dfdbd2" /><path d="M9 5q2 3 0 6M11 3q4 5 0 10M13 1q6 7 0 14" stroke="#dfdbd2" strokeWidth="1.500" /></svg>
          <svg width="16" height="16" viewBox="0 0 16 16" fill="none" aria-hidden="true"><path d="M5 3a6.200 6.200 0 1 0 6 0M8 0v7" stroke="#dfdbd2" strokeWidth="1.800" /></svg>
          <Caret />
        </TopRight>
      </TopBar>
      <Body>
        <Dock aria-label="Dock">
          {dockItems.map((item) => (
            <DockItem key={item.name} $active={item.active} aria-label={item.name}>
              {item.dots && <Dots>{Array.from({ length: item.dots }, (_, i) => <i key={i} />)}</Dots>}
              {item.icon}
            </DockItem>
          ))}
          <DockItem $last aria-label="Show applications">
            <DockIcon>{[8, 23, 38].map((y) => [8, 23, 38].map((x) => <circle key={`${x}-${y}`} cx={x - (x - 23) / 5} cy={y - (y - 23) / 5} r="3" fill="#f2f0ef" />))}</DockIcon>
          </DockItem>
        </Dock>
        <Window>
          <TitleBar>
            <Title>Eeschema — jzkeyboard [/] — /home/tiago/projectos/jzkeyboard</Title>
            <WindowButtons>
              <RoundButton aria-label="Minimise"><svg width="14" height="14" viewBox="0 0 14 14"><path d="M3.500 7.500h7" stroke="#33322e" /></svg></RoundButton>
              <RoundButton aria-label="Maximise"><svg width="14" height="14" viewBox="0 0 14 14"><path d="M4 4h6v6H4z" fill="none" stroke="#33322e" /></svg></RoundButton>
              <RoundButton $close aria-label="Close"><svg width="14" height="14" viewBox="0 0 14 14"><path d="M4.500 4.500l5 5M9.500 4.500l-5 5" stroke="#33322e" strokeWidth="1.300" /></svg></RoundButton>
            </WindowButtons>
          </TitleBar>
          <MenuBar>{menus.map((m) => <button key={m}>{m}</button>)}</MenuBar>
          <ToolBar>
            {toolGroups.map((group, i) => (
              <React.Fragment key={group[0][0]}>
                {i > 0 && <Divider />}
                {group.map(([name, icon]) => <ToolButton key={name} aria-label={name}>{icons[icon]}</ToolButton>)}
              </React.Fragment>
            ))}
          </ToolBar>
          <Workspace>
            <SideTools column={1} tools={leftTools} label="Display options" />
            <Canvas><Schematic /></Canvas>
            <Scroll $vertical>
              <Step label="Scroll up" d="M3 1l3 4H0z" />
              <Track $vertical><Thumb $vertical><i /><i /><i /></Thumb></Track>
              <Step label="Scroll down" d="M3 5l3-4H0z" />
            </Scroll>
            <Scroll>
              <Step label="Scroll left" d="M1 3l4-3v6z" />
              <Track><Thumb><i /><i /><i /></Thumb></Track>
              <Step label="Scroll right" d="M5 3L1 0v6z" />
            </Scroll>
            <SideTools column={4} tools={rightTools} label="Drawing tools" />
          </Workspace>
          <InfoPanel>
            {fields.map(([name, value, color]) => <Field key={name} $color={color}><dt>{name}</dt><dd>{value}</dd></Field>)}
          </InfoPanel>
          <StatusBar>
            <span>File /home/tiago/projectos/jzkeyboard/jzkeyboard.sch saved</span>
            <span>Z 1.83</span>
            <span>{"X 410.20  Y 67.30"}</span>
            <span>{"dx 410.20  dy 67.30  dist 415.68"}</span>
            <span>mm</span>
          </StatusBar>
        </Window>
      </Body>
    </Desktop>
  );
}
